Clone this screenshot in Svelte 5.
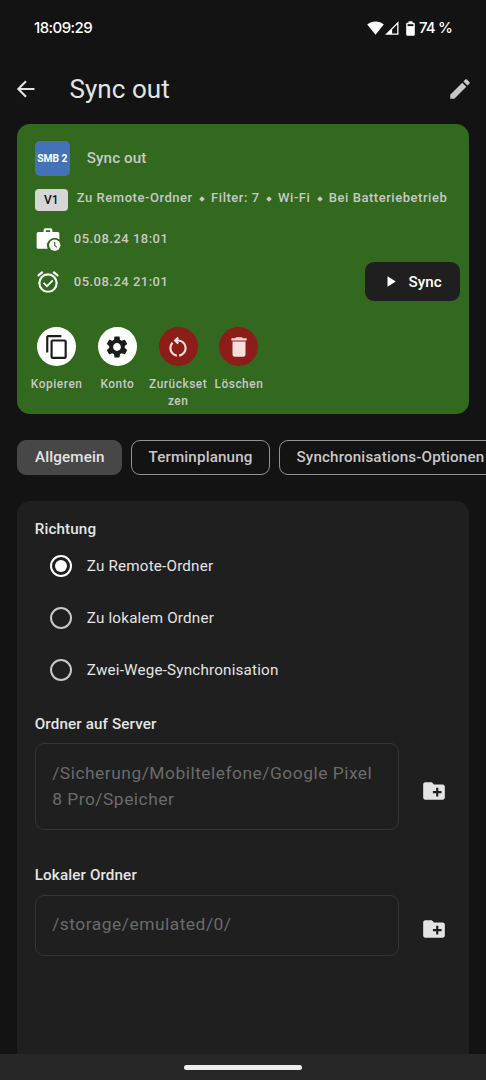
<script>
  const details = ['Zu Remote-Ordner', 'Filter: 7', 'Wi-Fi', 'Bei Batteriebetrieb'];
  const tabs = ['Allgemein', 'Terminplanung', 'Synchronisations-Optionen'];
  const directions = ['Zu Remote-Ordner', 'Zu lokalem Ordner', 'Zwei-Wege-Synchronisation'];
  const actions = [
    { label: 'Kopieren', icon: 'copy' },
    { label: 'Konto', icon: 'gear' },
    { label: 'Zurücksetzen', icon: 'reset', danger: true },
    { label: 'Löschen', icon: 'trash', danger: true }
  ];
  const icons = {
    copy: 'M16 1H4C2.900 1 2 1.900 2 3v14h2V3h12V1zm3 4H8C6.900 5 6 5.900 6 7v14c0 1.100.9 2 2 2h11c1.100 0 2-.9 2-2V7c0-1.100-.9-2-2-2zm0 16H8V7h11v14z',
    gear: 'M19.140 12.940c.04-.3.06-.61.06-.94 0-.32-.02-.64-.07-.94l2.030-1.580c.18-.14.23-.41.12-.61l-1.920-3.320c-.12-.22-.37-.29-.59-.22l-2.390.96c-.5-.38-1.030-.7-1.620-.94l-.36-2.540c-.04-.24-.24-.41-.48-.41h-3.840c-.24 0-.43.17-.47.41l-.36 2.540c-.59.24-1.130.57-1.620.94l-2.390-.96c-.22-.08-.47 0-.59.22L2.740 8.870c-.12.21-.08.47.12.61l2.030 1.580c-.05.3-.09.63-.09.94s.02.64.07.94l-2.030 1.580c-.18.14-.23.41-.12.61l1.920 3.320c.12.22.37.29.59.22l2.390-.96c.5.38 1.030.7 1.620.94l.36 2.540c.05.24.24.41.48.41h3.840c.24 0 .44-.17.47-.41l.36-2.540c.59-.24 1.130-.56 1.620-.94l2.390.96c.22.08.47 0 .59-.22l1.920-3.320c.12-.22.07-.47-.12-.61l-2.010-1.580zM12 15.600c-1.980 0-3.600-1.620-3.600-3.600s1.620-3.600 3.600-3.600 3.600 1.620 3.600 3.600-1.620 3.600-3.600 3.600z',
    reset: 'M6 13c0-1.650.67-3.150 1.760-4.240L6.340 7.340C4.900 8.790 4 10.790 4 13c0 4.080 3.050 7.440 7 7.930v-2.020c-2.830-.48-5-2.940-5-5.910zm14 0c0-4.420-3.580-8-8-8-.06 0-.12.010-.18.010l1.090-1.090L11.500 2.500 8 6l3.500 3.500 1.410-1.410-1.080-1.080c.06 0 .12-.01.170-.01 3.310 0 6 2.690 6 6 0 2.970-2.170 5.430-5 5.910v2.020c3.950-.49 7-3.850 7-7.930z',
    trash: 'M6 19c0 1.100.9 2 2 2h8c1.100 0 2-.9 2-2V7H6v12zM19 4h-3.500l-1-1h-5l-1 1H5v2h14V4z'
  };
  const folders = [
    { title: 'Ordner auf Server', path: '/Sicherung/Mobiltelefone/Google Pixel 8 Pro/Speicher' },
    { title: 'Lokaler Ordner', path: '/storage/emulated/0/' }
  ];
  let selected = $state(0);
  let activeTab = $state(0);
</script>

<div class="screen">
  <div class="status">
    <span class="clock">18:09:29</span>
    <div class="indicators">
      <svg width="17" height="14" viewBox="0 0 17 14"><path d="M8.500 13.700.2 3.600C2.500 1.600 5.300.6 8.500.6s6 1 8.300 3z" fill="#fff" /></svg>
      <svg class="cell" width="14" height="14" viewBox="0 0 14 14"><path d="M13.500.3V13.700H.1z" fill="#fff" /><path d="M12.200 3.500v9H7.100V8.600z" fill="#131313" /></svg>
      <svg class="battery" width="9" height="15" viewBox="0 0 9 15"><path d="M2.500.3h4v1.500h1.200q1.100 0 1.100 1.100v10.600q0 1.200-1.200 1.200H1.400Q.2 14.700.2 13.500V2.900q0-1.100 1.100-1.100h1.200z" fill="#fff" /><path d="M1.600 3.200h5.800v1.900H1.600z" fill="#131313" /></svg>
      <span class="percent">74 %</span>
    </div>
  </div>

  <header>
    <svg width="26" height="26" viewBox="0 0 24 24"><path d="M19.800 12H5M12 4.900 4.900 12l7.100 7.100" fill="none" stroke="#e4e4e4" stroke-width="1.900" /></svg>
    <h1>Sync out</h1>
    <svg width="26" height="26" viewBox="0 0 24 24"><path d="M3 17.250V21h3.750L17.810 9.940l-3.750-3.750L3 17.250zM20.710 7.040c.39-.39.39-1.020 0-1.410l-2.340-2.340c-.39-.39-1.020-.39-1.410 0l-1.830 1.830 3.750 3.750 1.830-1.830z" fill="#c8c8c8" /></svg>
  </header>

  <section class="card">
    <div class="name"><span class="badge">SMB 2</span><span class="title">Sync out</span></div>
    <div class="details">
      <span class="version">V1</span>
      <div class="facts">
        {#each details as item, i}
          {#if i}<i></i>{/if}<span>{item}</span>
        {/each}
      </div>
    </div>
    <div class="times">
      <div class="stamps">
        <div class="stamp">
          <svg width="26" height="26" viewBox="0 0 24 24">
            <path d="M9 6V3.500Q9 3 9.500 3h5q.5 0 .5.500V6" fill="none" stroke="#fff" stroke-width="2" />
            <path d="M3 5.500h18q1.500 0 1.500 1.500v5.500A7.100 7.100 0 0 0 11.700 21H3q-1.500 0-1.500-1.500V7Q1.500 5.500 3 5.500z" fill="#fff" />
            <circle cx="18.200" cy="17.700" r="5.200" fill="#fff" />
            <path d="M18.200 14.700v3.100l1.900 1.900" fill="none" stroke="#33691e" stroke-width="1" />
          </svg>
          <span>05.08.24 18:01</span>
        </div>
        <div class="stamp">
          <svg width="26" height="26" viewBox="0 0 24 24" fill="none" stroke="#fff">
            <circle cx="12" cy="13" r="8" stroke-width="2" /><path d="m2.600 6.400 4.600-3.800m9.600 0 4.600 3.800" stroke-width="2" /><path d="m7.900 12.800 3.100 3.100 5.400-5.400" stroke-width="1.600" />
          </svg>
          <span>05.08.24 21:01</span>
        </div>
      </div>
      <button class="sync"><svg width="9" height="11" viewBox="0 0 9 11"><path d="M.5.3 8.700 5.500.5 10.700z" fill="#fff" /></svg>Sync</button>
    </div>
    <div class="actions">
      {#each actions as action}
        <button class="action" class:danger={action.danger}>
          <span class="disc"><svg width="26" height="26" viewBox="0 0 24 24"><path d={icons[action.icon]} /></svg></span>
          <span class="label">{action.label}</span>
        </button>
      {/each}
    </div>
  </section>

  <nav>
    {#each tabs as tab, i}
      <button class="tab" class:active={activeTab === i} onclick={() => (activeTab = i)}>{tab}</button>
    {/each}
  </nav>

  <main>
    <h2>Richtung</h2>
    <div class="radios">
      {#each directions as direction, i}
        <button class="radio" class:on={selected === i} onclick={() => (selected = i)}><span class="ring"></span><span class="choice">{direction}</span></button>
      {/each}
    </div>
    {#each folders as folder}
      <div class="folder">
        <h2>{folder.title}</h2>
        <div class="field">
          <div class="path">{folder.path}</div>
          <svg width="26" height="26" viewBox="0 0 24 24"><path d="M20 6h-8l-2-2H4c-1.110 0-1.990.89-1.990 2L2 18c0 1.110.89 2 2 2h16c1.110 0 2-.89 2-2V8c0-1.110-.89-2-2-2zm-1 8h-3v3h-2v-3h-3v-2h3V9h2v3h3v2z" fill="#e4e4e4" /></svg>
        </div>
      </div>
    {/each}
  </main>
  <footer><span></span></footer>
</div>

<style>
  :global(body) { background: #131313; overflow: hidden; }
  * { box-sizing: border-box; }
  .screen { width: 486px; height: 1080px; display: flex; flex-direction: column; overflow: hidden; background: #131313; color: #e4e4e4; font-family: Roboto, sans-serif; }
  svg { display: block; flex: none; }
  button { font: inherit; color: inherit; border: 0; padding: 0; background: none; letter-spacing: inherit; }
  h1, h2 { margin: 0; }
  .status { height: 56px; flex: none; display: flex; align-items: center; justify-content: space-between; padding: 0 34px 0 34px; color: #fff; font: 500 15px/20px Inter, sans-serif; }
  .clock { letter-spacing: -.55px; }
  .indicators { display: flex; align-items: center; }
  .cell { margin-left: 1px; }
  .battery { margin: 0 4px 0 7px; }
  .percent { letter-spacing: -.85px; }
  header { height: 68px; flex: none; display: flex; align-items: center; padding: 0 13px 2px; }
  h1 { flex: 1; margin-left: 30.500px; font-size: 26px; font-weight: 400; line-height: 34px; letter-spacing: .05px; }
  .card { height: 290px; flex: none; margin: 0 17.400px; padding: 17px 8.500px 0 17.400px; border-radius: 13px; background: #33691e; color: #c8c8c8; font-weight: 500; }
  .name { height: 35px; display: flex; align-items: center; gap: 17px; font-size: 15.200px; letter-spacing: .1px; }
  .title { padding-bottom: 1px; }
  .badge { width: 35px; height: 35px; display: grid; place-items: center; border-radius: 5px; background: #4472b9; color: #fff; font-size: 10.300px; font-weight: 700; letter-spacing: -.05px; white-space: nowrap; }
  .details { height: 22px; display: flex; align-items: center; margin-top: 13px; gap: 9px; }
  .version { width: 33px; height: 22px; display: grid; place-items: center; border-radius: 4px; background: #d6d6d6; color: #111; font-size: 12px; }
  .facts { display: flex; align-items: center; font-size: 13px; letter-spacing: .54px; white-space: nowrap; padding-bottom: 5px; }
  .facts i { width: 4px; height: 4px; margin: 2px 7.200px 0; transform: rotate(45deg); background: #c8c8c8; }
  .times { display: flex; justify-content: space-between; align-items: flex-end; margin-top: 6px; height: 84px; }
  .stamps { align-self: flex-start; }
  .stamp { height: 43.200px; display: flex; align-items: center; gap: 13px; font-size: 13px; letter-spacing: .48px; }
  .stamp span { padding-bottom: 1px; }
  .sync { width: 95px; height: 39px; display: flex; align-items: center; justify-content: center; gap: 12.500px; padding-left: 3.500px; border-radius: 9px; background: #1f1f1f; color: #fff; font-size: 15.200px; letter-spacing: .1px; }
  .actions { display: flex; margin: 26px 0 0 -8.500px; }
  .action { width: 60.750px; display: flex; flex-direction: column; align-items: center; }
  .disc { width: 39px; height: 39px; display: grid; place-items: center; border-radius: 50%; background: #fff; fill: #1b1b1b; }
  .danger .disc { background: #8c1d18; fill: #f9dedc; }
  .label { width: 100%; margin-top: 10px; font-size: 11.900px; line-height: 17.400px; letter-spacing: .54px; overflow-wrap: anywhere; }
  nav { height: 35px; flex: none; display: flex; gap: 8.700px; margin: 26px 0 0 17.400px; }
  .tab { flex: none; height: 35px; padding: 0 16.600px 1px; border: 1px solid #929292; border-radius: 9px; font-size: 15.200px; font-weight: 500; letter-spacing: .15px; color: #c8c8c8; }
  .active { border-color: #474747; background: #474747; color: #e4e4e4; }
  main { height: 553px; flex: none; margin: 26px 17.400px 0; padding: 17px 0 0 17.400px; border-radius: 13px 13px 0 0; background: #1f1f1f; }
  h2 { font-size: 15.200px; line-height: 22px; font-weight: 500; letter-spacing: .13px; }
  .radio { height: 52px; display: flex; align-items: center; gap: 15px; padding-left: 15px; font-size: 15.200px; letter-spacing: .2px; }
  .choice { padding-bottom: 1px; }
  .ring { width: 22px; height: 22px; display: grid; place-items: center; border: 2px solid #c8c8c8; border-radius: 50%; }
  .on .ring { border-color: #fff; }
  .on .ring::after { content: ''; width: 12px; height: 12px; border-radius: 50%; background: #fff; }
  .folder { height: 151.600px; padding-top: 16.500px; }
  .field { display: flex; align-items: center; gap: 22px; margin-top: 8.500px; }
  .field svg { margin-top: 8px; }
  .path { width: 364px; padding: 15.500px 16.400px 17.500px; border: 1px solid #353535; border-radius: 9px; color: #6b6b6b; font-size: 17.400px; line-height: 26px; letter-spacing: .5px; }
  footer { height: 26px; flex: none; display: grid; place-items: center; background: #272727; }
  footer span { width: 118px; height: 5px; border-radius: 3px; background: #eee; }
</style>
